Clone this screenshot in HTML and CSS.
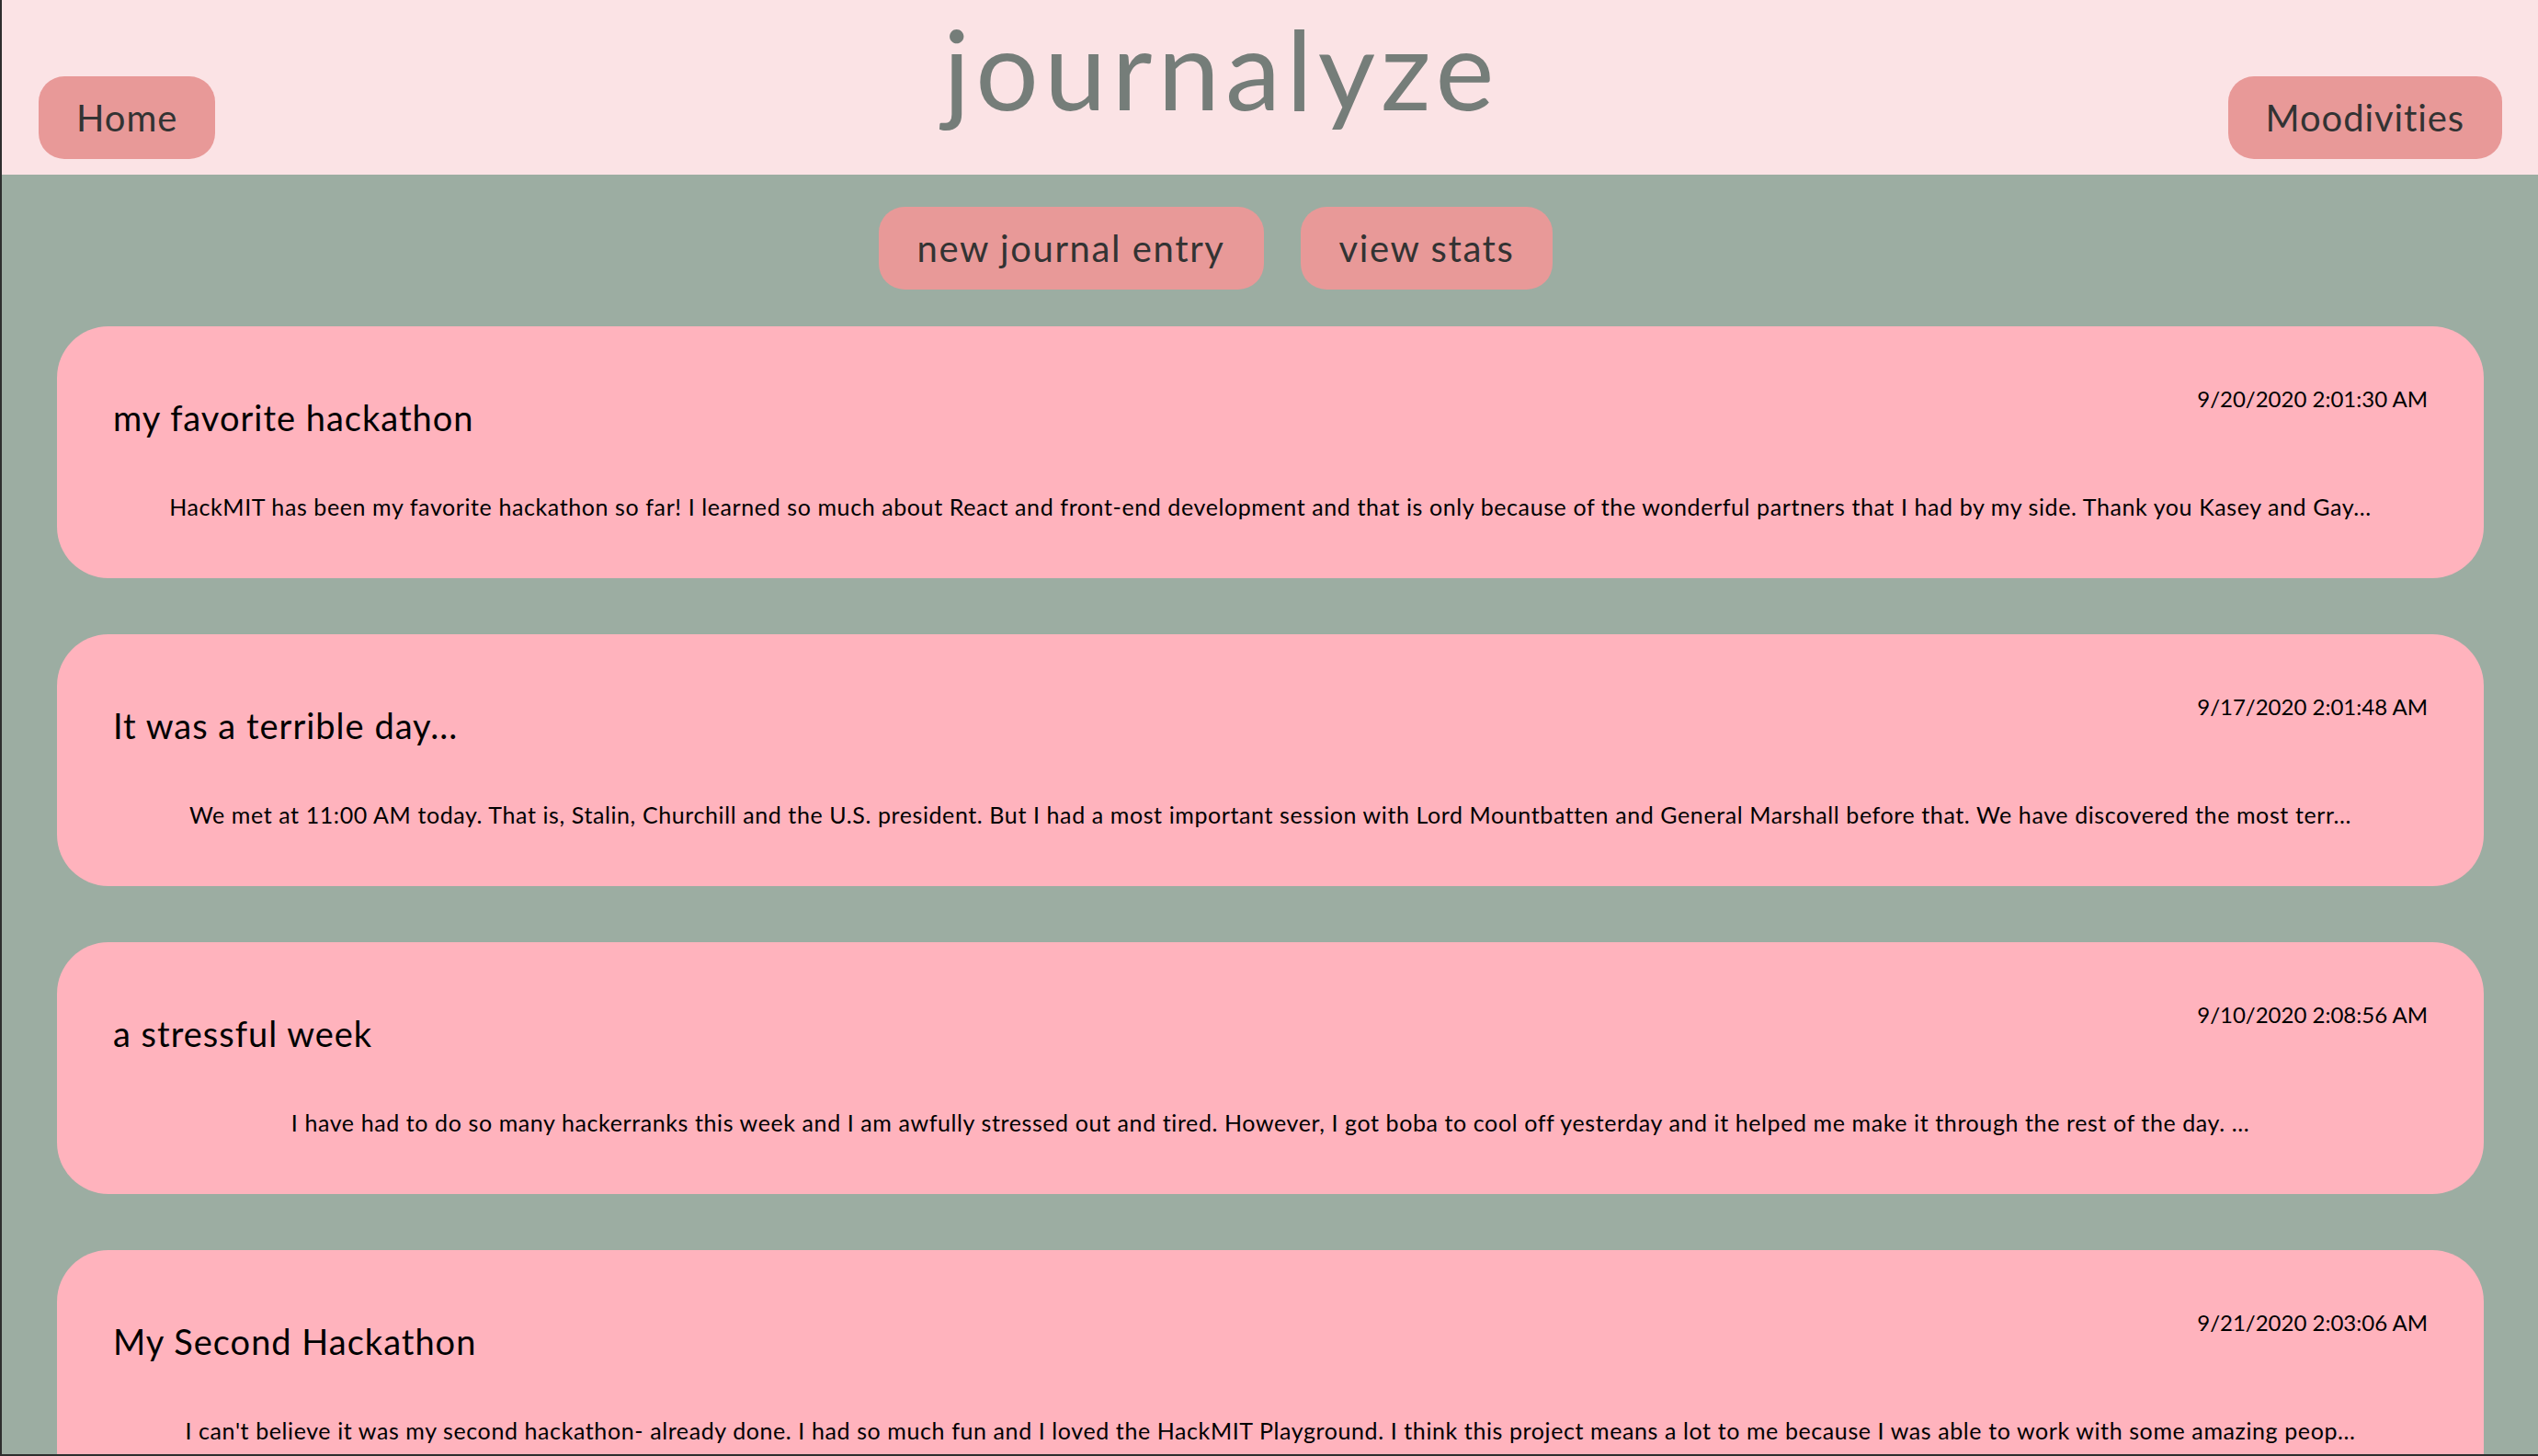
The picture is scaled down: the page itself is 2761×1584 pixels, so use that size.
FILE: index.html
```html
<!DOCTYPE html>
<html lang="en">
<head>
<meta charset="utf-8">
<title>journalyze</title>
<link rel="stylesheet" href="styles.css">
</head>
<body>
<div class="frame">
  <header class="topbar">
    <a class="nav-btn">Home</a>
    <h1 class="brand">journalyze</h1>
    <a class="nav-btn">Moodivities</a>
  </header>
  <main class="content">
    <div class="actions">
      <a class="action-btn">new journal entry</a>
      <a class="action-btn">view stats</a>
    </div>
    <section class="entries">
      <article class="entry">
        <div class="entry-head">
          <h3 class="entry-title">my favorite hackathon</h3>
          <span class="entry-date">9/20/2020 2:01:30 AM</span>
        </div>
        <p class="entry-body">HackMIT has been my favorite hackathon so far! I learned so much about React and front-end development and that is only because of the wonderful partners that I had by my side. Thank you Kasey and Gay...</p>
      </article>
      <article class="entry">
        <div class="entry-head">
          <h3 class="entry-title">It was a terrible day...</h3>
          <span class="entry-date">9/17/2020 2:01:48 AM</span>
        </div>
        <p class="entry-body">We met at 11:00 AM today. That is, Stalin, Churchill and the U.S. president. But I had a most important session with Lord Mountbatten and General Marshall before that. We have discovered the most terr...</p>
      </article>
      <article class="entry">
        <div class="entry-head">
          <h3 class="entry-title">a stressful week</h3>
          <span class="entry-date">9/10/2020 2:08:56 AM</span>
        </div>
        <p class="entry-body">I have had to do so many hackerranks this week and I am awfully stressed out and tired. However, I got boba to cool off yesterday and it helped me make it through the rest of the day. ...</p>
      </article>
      <article class="entry">
        <div class="entry-head">
          <h3 class="entry-title">My Second Hackathon</h3>
          <span class="entry-date">9/21/2020 2:03:06 AM</span>
        </div>
        <p class="entry-body">I can't believe it was my second hackathon- already done. I had so much fun and I loved the HackMIT Playground. I think this project means a lot to me because I was able to work with some amazing peop...</p>
      </article>
    </section>
  </main>
</div>
</body>
</html>
```
FILE: styles.css
```css
html, body {
  margin: 0;
  padding: 0;
  overflow: hidden;
}

body {
  font-family: Lato, "Open Sans", sans-serif;
  background: #9cada2;
}

.frame {
  box-sizing: border-box;
  height: 100vh;
  overflow: hidden;
  border-left: 2px solid #2e2e2e;
  border-bottom: 2px solid #2e2e2e;
  background: #9cada2;
}

.topbar {
  box-sizing: border-box;
  height: 190px;
  background: #fbe3e5;
  display: flex;
  justify-content: space-between;
  align-items: flex-end;
  padding: 0 39px 17px 40px;
}

.nav-btn {
  box-sizing: border-box;
  height: 90px;
  display: flex;
  align-items: center;
  padding: 0 41px;
  border-radius: 28px;
  background: #e89998;
  color: #333333;
  font-size: 40px;
  letter-spacing: 0.9px;
  cursor: pointer;
}

.brand {
  align-self: flex-start;
  margin: 1px 0 0;
  font-size: 121px;
  line-height: 1.2;
  font-weight: 400;
  color: #757d79;
  letter-spacing: 6px;
}

.actions {
  display: flex;
  justify-content: center;
  gap: 40px;
  padding: 35px 118px 0 0;
}

.action-btn {
  box-sizing: border-box;
  height: 90px;
  display: flex;
  align-items: center;
  padding: 0 42px;
  border-radius: 28px;
  background: #e89998;
  color: #333333;
  font-size: 40px;
  letter-spacing: 1.6px;
  cursor: pointer;
}

.entries {
  display: flex;
  flex-direction: column;
  gap: 61px;
  padding: 40px 59px 0 60px;
}

.entry {
  box-sizing: border-box;
  height: 274px;
  flex-shrink: 0;
  padding: 64px 61px 0;
  border-radius: 56px;
  background: #ffb3bd;
  color: #000000;
}

.entry-head {
  display: flex;
  justify-content: space-between;
  align-items: flex-start;
}

.entry-title {
  margin: 12px 0 0;
  font-size: 38px;
  line-height: 46px;
  font-weight: 400;
  letter-spacing: 1px;
}

.entry-date {
  font-size: 24px;
  line-height: 30px;
  letter-spacing: 0;
}

.entry-body {
  margin: 59px 0 0;
  text-align: center;
  font-size: 25px;
  line-height: 30px;
  letter-spacing: 0.6px;
  white-space: nowrap;
}
```
